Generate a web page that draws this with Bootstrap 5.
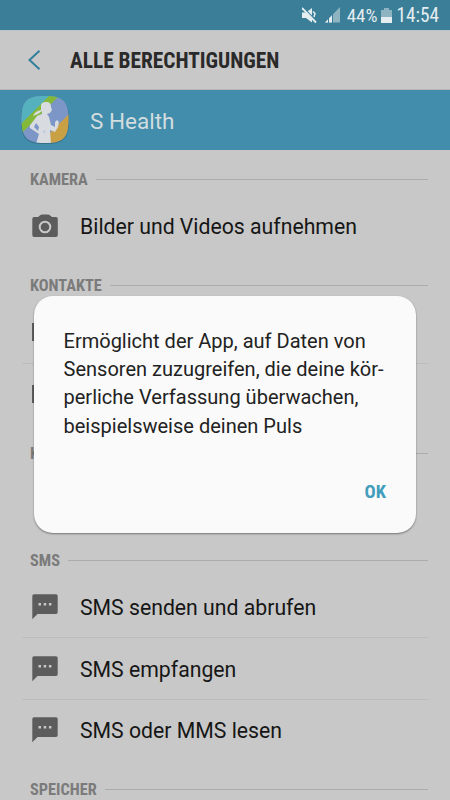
<!DOCTYPE html>
<html lang="de">
<head>
<meta charset="utf-8">
<meta name="viewport" content="width=device-width, initial-scale=1">
<title>Alle Berechtigungen</title>
<link href="https://cdn.jsdelivr.net/npm/bootstrap@5.3.0/dist/css/bootstrap.min.css" rel="stylesheet">
<style>
body{font-family:Roboto,"Liberation Sans",sans-serif;background:#c8c8c8;color:#161616;height:800px;overflow:hidden}
.cond{font-family:"Roboto Condensed",Roboto,sans-serif;font-stretch:75%;font-weight:700;white-space:nowrap}
.status{height:30px;background:#3b7e98;color:#e4edf0;padding-right:11px;line-height:30px}
.status .t{font-size:19.3px;white-space:nowrap;padding-top:2px}
.status .pct{margin-left:6px;font-size:19px}
.status .batt{margin-left:4px}
.status .clock{margin-left:4px}
.topbar{height:60px;padding-left:28px;border-bottom:1px solid #b5b5b5;border-top:1px solid #b9c3c8}
.topbar h1{font-size:21.35px;color:#2a2a2a;margin:1px 0 0 29px}
.appbar{height:60px;background:#418dab;color:#d3dcdf;padding-left:21px;font-size:22.5px}
.appbar .nm{margin-left:21px;margin-top:3px}
.perms{padding:12px 22px 0 22px}
.group{padding-bottom:12.5px}
.ghead{height:34px;padding-left:8px;color:#7b7b7b;font-size:16.3px}
.ghead span{padding-top:2px}
.rule{height:1px;background:#acacac}
.perm{height:60px;padding:1.5px 0 0 10px;font-size:21.23px}
.perm+.perm{height:61.5px;padding-top:3px;border-top:1px solid #bcbcbc}
.perm svg{width:26px;margin:0 22px 2px 0;flex:none}
.dialog{left:33.5px;top:296px;width:382.5px;height:237px;background:#fafafa;border-radius:19px;box-shadow:0 1px 2px rgba(0,0,0,.42);padding:30.5px 30px 0 30px}
.dialog p{font-size:20.03px;line-height:28.4px;white-space:nowrap;color:#222}
.dialog button{font-size:18.5px;color:#439ebc;line-height:22px;margin-top:1px}
</style>
</head>
<body>
<svg width="0" height="0" class="d-none">
<symbol id="cam" viewBox="0 0 26 24"><path fill="#5c5c5c" fill-rule="evenodd" d="M2 3H6L8.500 1Q9 .6 10 .6H16Q17 .6 17.500 1L20 3H24Q25.800 3 25.800 5V21Q25.800 23 24 23H2Q.3 23 .3 21V5Q.3 3 2 3Z"/><circle cx="13" cy="13" r="5.300" fill="none" stroke="#c8c8c8" stroke-width="2"/></symbol>
<symbol id="msg" viewBox="0 0 26 26"><path fill="#5c5c5c" d="M2 .3H24Q25.700 .3 25.700 2V18.300Q25.700 20 24 20H5.500L.3 25.200V2Q.3 .3 2 .3Z"/><path fill="#c8c8c8" d="M6.500 9H9V11.500H6.500ZM11.700 9H14.200V11.500H11.700ZM16.900 9H19.400V11.500H16.900Z"/></symbol>
<symbol id="contact" viewBox="0 0 26 20"><rect width="26" height="18" y="1" fill="#5c5c5c"/></symbol>
</svg>
<div class="status d-flex align-items-center justify-content-end">
<svg width="15" height="17" viewBox="0 0 15 17" fill="#e4edf0"><path d="M0 5.500H4L10 1V15.500L4 11H0Z"/><path d="M0 1.500L14 15.500" transform="translate(1 -1)" stroke="#3b7e98" stroke-width="1.500"/><path d="M0 1L14 15.500" stroke="#e4edf0" stroke-width="1.800"/><path d="M11 4.500L13 6.500L12 10" fill="none" stroke="#e4edf0" stroke-width="1.500"/></svg>
<svg class="ms-2" width="16" height="16" viewBox="0 0 16 16"><path d="M0 15.500L15 0V15.500Z" fill="#8eb3c1"/><path d="M0 15.500L7 8.300V15.500Z" fill="#e4edf0"/><path d="M3.500 8V16M7.500 6V16" stroke="#3b7e98" stroke-width="1"/></svg>
<span class="t cond fw-normal pct">44%</span>
<svg class="batt" width="11" height="15" viewBox="0 0 11 15"><path d="M3 0H8V2H11V15H0V2H3Z" fill="#8eb3c1"/><path d="M0 9H11V15H0Z" fill="#e4edf0"/></svg>
<span class="t cond fw-normal clock">14:54</span>
</div>
<header class="topbar d-flex align-items-center">
<svg width="13" height="20" viewBox="0 0 13 20"><path d="M11.500 .8L1.500 10L11.500 19.200" fill="none" stroke="#347f9c" stroke-width="2"/></svg>
<h1 class="cond"><span>ALLE BERECHTIGUNGEN</span></h1>
</header>
<div class="appbar d-flex align-items-center">
<svg width="48" height="48" viewBox="0 0 48 48"><defs><clipPath id="ic"><path d="M24 0C42 0 47.500 5 47.500 23.500S42 47 24 47 .5 42 .5 23.500 6 0 24 0Z"/></clipPath></defs><path d="M24 1C42 1 48 6 48 24.500S42 48 24 48 0 43 0 24.500 6 1 24 1Z" fill="#346f87"/><g clip-path="url(#ic)"><path fill="#7b96c7" d="M0 0H48V47H0Z"/><path fill="#54b1bd" d="M0 0H30L0 29Z"/><path fill="#84b838" d="M28 0H38L0 38V28Z"/><path fill="#c9a044" d="M48 18L29 37V48H48Z"/><path fill="#d8dce0" d="M20 10C20 7 22 6 25 6C29 6 30 8 30 11L31 14L29 17L26 18L28 21L30 29L34 31L34 26L36 24L38 26L37 31L34 36L29 34L30 48H15L18 38L9 32Q8 30 10 28L16 20Q18 19 21 18L21 15Q17 19 12 20Q14 15 20 14Z"/><path d="M15 27L13 31L17 35L18 31Z" fill="#7b96c7"/><path d="M22 35L25 34L23 38Z" fill="#b9c7de"/></g></svg>
<span class="nm">S Health</span>
</div>
<main class="perms">
<section class="group"><div class="ghead d-flex align-items-center gap-2"><span class="cond">KAMERA</span><div class="rule flex-grow-1"></div></div>
<div class="perm d-flex align-items-center"><svg height="24"><use href="#cam"/></svg><span>Bilder und Videos aufnehmen</span></div></section>
<section class="group"><div class="ghead d-flex align-items-center gap-2"><span class="cond">KONTAKTE</span><div class="rule flex-grow-1"></div></div>
<div class="perm d-flex align-items-center"><svg height="20"><use href="#contact"/></svg></div>
<div class="perm d-flex align-items-center"><svg height="20"><use href="#contact"/></svg></div></section>
<section class="group"><div class="ghead d-flex align-items-center gap-2"><span class="cond">KÖRPERSENSOREN</span><div class="rule flex-grow-1"></div></div>
<div class="perm"></div></section>
<section class="group"><div class="ghead d-flex align-items-center gap-2"><span class="cond">SMS</span><div class="rule flex-grow-1"></div></div>
<div class="perm d-flex align-items-center"><svg height="26"><use href="#msg"/></svg><span>SMS senden und abrufen</span></div>
<div class="perm d-flex align-items-center"><svg height="26"><use href="#msg"/></svg><span>SMS empfangen</span></div>
<div class="perm d-flex align-items-center"><svg height="26"><use href="#msg"/></svg><span>SMS oder MMS lesen</span></div></section>
<section class="group"><div class="ghead d-flex align-items-center gap-2"><span class="cond">SPEICHER</span><div class="rule flex-grow-1"></div></div></section>
</main>
<div class="dialog position-absolute" role="dialog">
<p class="m-0">Ermöglicht der App, auf Daten von<br>Sensoren zuzugreifen, die deine kör-<br>perliche Verfassung überwachen,<br>beispielsweise deinen Puls</p>
<div class="d-flex justify-content-end mt-4 pt-3"><button class="btn p-0 border-0 cond">OK</button></div>
</div>
<script src="https://cdn.jsdelivr.net/npm/bootstrap@5.3.0/dist/js/bootstrap.bundle.min.js"></script>
</body>
</html>
